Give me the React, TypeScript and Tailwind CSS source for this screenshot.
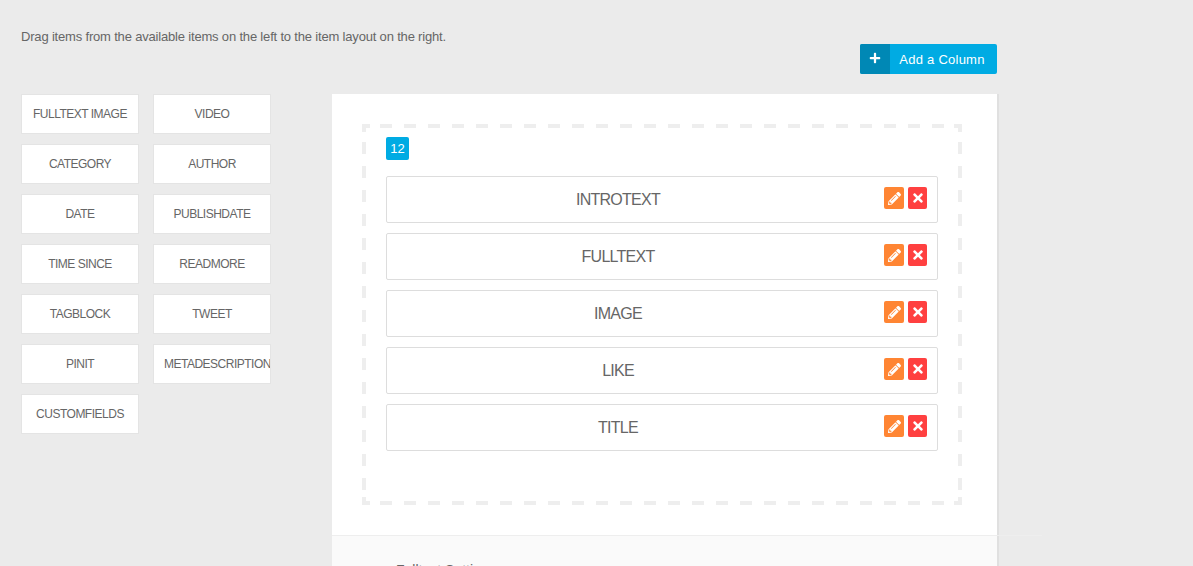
import { FaPencilAlt, FaPlus, FaTimes } from "react-icons/fa";

const available = [
  "FULLTEXT IMAGE",
  "VIDEO",
  "CATEGORY",
  "AUTHOR",
  "DATE",
  "PUBLISHDATE",
  "TIME SINCE",
  "READMORE",
  "TAGBLOCK",
  "TWEET",
  "PINIT",
  "METADESCRIPTION",
  "CUSTOMFIELDS",
];

const layoutItems = ["INTROTEXT", "FULLTEXT", "IMAGE", "LIKE", "TITLE"];

/** Dashed drop zone outline: 12px dashes on a 24px period with L-shaped corners. */
function DashedOutline() {
  const dash = { stroke: "#eeeeee", strokeWidth: 4, strokeDasharray: "12 12", fill: "none" };
  return (
    <svg className="absolute inset-0" width="600" height="381" aria-hidden="true">
      <line x1="18" y1="2" x2="590" y2="2" {...dash} />
      <line x1="18" y1="379" x2="590" y2="379" {...dash} />
      <line x1="2" y1="18" x2="2" y2="366" {...dash} />
      <line x1="598" y1="18" x2="598" y2="366" {...dash} />
      <path
        d="M0 0h8v4H4v4H0zM600 0h-8v4h4v4h4zM0 381h8v-4H4v-4H0zM600 381h-8v-4h4v-4h4z"
        fill="#eeeeee"
      />
    </svg>
  );
}

function LayoutRow({ label }: { label: string }) {
  return (
    <div className="relative flex h-[47px] items-center justify-center rounded-[2px] border border-[#dddddd] bg-white pr-[88px]">
      <span className="text-[16px] tracking-[-0.75px] text-[#666666]">{label}</span>
      <div className="absolute right-[10px] top-[10px] flex gap-1">
        <button className="flex h-[22px] w-5 items-center justify-center rounded-[2px] bg-[#ff8533] text-white">
          <FaPencilAlt className="h-[13px] w-[13px]" />
        </button>
        <button className="flex h-[22px] w-[19px] items-center justify-center rounded-[2px] bg-[#ff4040] text-white">
          <FaTimes className="h-[14px] w-[14px]" />
        </button>
      </div>
    </div>
  );
}

export default function App() {
  return (
    <div className="h-[566px] overflow-hidden bg-[#ebebeb] pl-[21px] pt-[29px] font-['Liberation_Sans',Arial,sans-serif]">
      <p className="h-[15px] text-[13px] leading-[15px] tracking-[-0.18px] text-[#666666]">
        Drag items from the available items on the left to the item layout on the right.
      </p>
      <div className="flex w-[976px] justify-end">
        <button className="flex h-[30px] w-[137px] overflow-hidden rounded-[2px] bg-[#00abe3] text-white">
          <span className="flex h-full w-[30px] items-center justify-center bg-[#0088b5]">
            <FaPlus className="h-3 w-3 -translate-y-px" />
          </span>
          <span className="flex-1 pr-[3px] text-center text-[13px] leading-[31px] tracking-[0.25px]">Add a Column</span>
        </button>
      </div>
      <div className="mt-5 flex items-start">
        <div className="grid w-[311px] grid-cols-[118px_118px] content-start gap-x-[14px] gap-y-[10px]">
          {available.map((item) => (
            <div
              key={item}
              className="h-10 overflow-hidden whitespace-nowrap border border-[#e4e4e4] bg-white px-[10px] text-center text-[12px] leading-[38px] tracking-[-0.5px] text-[#666666]"
            >
              {item}
            </div>
          ))}
        </div>
        <div className="relative w-[665px] bg-white shadow-[2px_0_0_#e0e0e0]">
          <div className="p-[30px]">
            <div className="relative h-[381px] w-[600px] px-6 pt-[13px]">
              <DashedOutline />
              <span className="relative flex h-[23px] w-[23px] items-center justify-center rounded-[2px] bg-[#00abe3] text-[13px] text-white">
                12
              </span>
              <div className="relative mt-4 flex w-[552px] flex-col gap-[10px]">
                {layoutItems.map((item) => (
                  <LayoutRow key={item} label={item} />
                ))}
              </div>
            </div>
          </div>
          <div className="relative border-t border-[#eeeeee] bg-[#fafafa] pl-[64px] pt-[24px] text-[14px] text-[#666666]">
            <span className="absolute -top-px left-full h-px w-[45px] bg-[#eeeeee]" />
            Fulltext Settings
          </div>
        </div>
      </div>
    </div>
  );
}
